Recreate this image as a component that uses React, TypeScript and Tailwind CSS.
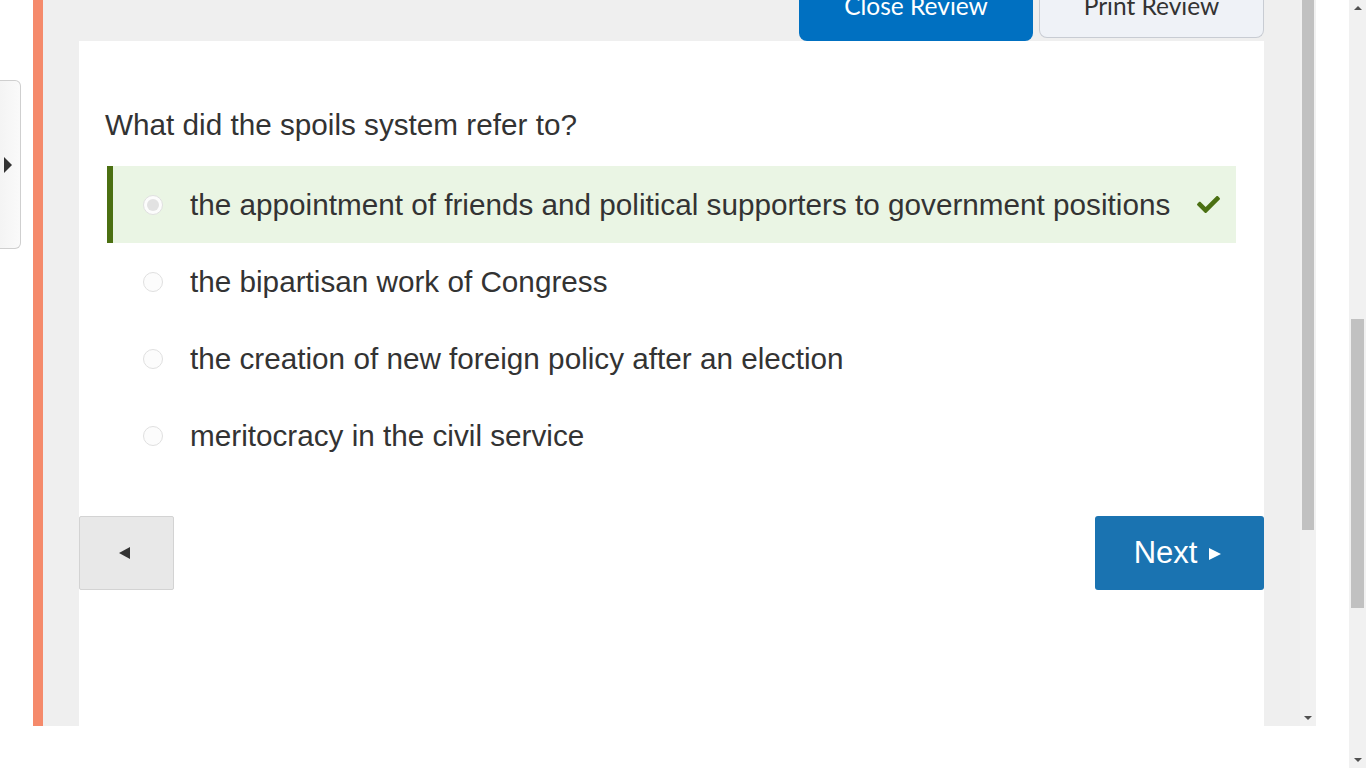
import React from 'react';
import { FaCheck } from 'react-icons/fa';

const options = [
    'the appointment of friends and political supporters to government positions',
    'the bipartisan work of Congress',
    'the creation of new foreign policy after an election',
    'meritocracy in the civil service',
];

const Scrollbar: React.FC<{ thumbTop: number; thumbHeight: number; up?: boolean; className: string }> = ({
    thumbTop,
    thumbHeight,
    up,
    className,
}) => (
    <div className={`relative bg-[#f1f1f1] ${className}`}>
        {up && (
            <div className="absolute left-0 right-0 top-[6px] flex justify-center">
                <div className="w-0 h-0 border-l-[4px] border-r-[4px] border-b-[4px] border-l-transparent border-r-transparent border-b-[#505050]" />
            </div>
        )}
        <div
            className="absolute left-[2px] right-[2px] bg-[#c1c1c1]"
            style={{ top: thumbTop, height: thumbHeight }}
        />
        <div className="absolute left-0 right-0 bottom-[6px] flex justify-center">
            <div className="w-0 h-0 border-l-[4px] border-r-[4px] border-t-[4px] border-l-transparent border-r-transparent border-t-[#505050]" />
        </div>
    </div>
);

const App: React.FC = () => {
    return (
        <div
            className="relative w-[1366px] h-[768px] bg-white overflow-hidden flex"
            style={{ fontFamily: '"Liberation Sans", Arial, sans-serif' }}
        >
            <div className="flex flex-col w-[1349px]">
                <div className="flex h-[726px]">
                    {/* left gutter with collapsed sidebar tab */}
                    <div className="w-[33px] pt-[80px]">
                        <div className="w-[21px] h-[169px] rounded-r-[6px] border border-l-0 border-[#cfcfcf] bg-gradient-to-r from-[#f4f4f4] to-[#fafafa] flex items-center pl-[4px]">
                            <div className="w-0 h-0 border-t-[8px] border-b-[8px] border-l-[8px] border-t-transparent border-b-transparent border-l-[#333]" />
                        </div>
                    </div>
                    <div className="w-[10px] bg-[#f58a6b]" />

                    {/* main gray area */}
                    <div className="w-[1257px] bg-[#efefef] pl-[36px] pr-[36px] flex flex-col">
                        <div className="h-[41px] flex justify-end items-start gap-[6px] overflow-hidden" style={{ fontFamily: 'Lato, sans-serif' }}>
                            <div className="w-[234px] h-[41px] bg-[#0070c1] rounded-b-[8px] text-white text-[24.5px] text-center overflow-hidden">
                                <span className="block leading-[24px] -mt-[6px]">Close Review</span>
                            </div>
                            <div className="w-[225px] h-[38px] bg-[#eff2f7] border border-t-0 border-[#c8ccd3] rounded-b-[8px] text-[#333] text-[24.5px] text-center overflow-hidden">
                                <span className="block leading-[24px] -mt-[6px]">Print Review</span>
                            </div>
                        </div>

                        <div className="flex-1 bg-white px-[28px] flex flex-col">
                            <div className="pt-[66px] text-[29.7px] leading-[36px] text-[#333] -ml-[2px]">
                                What did the spoils system refer to?
                            </div>
                            <div className="mt-[23px] flex flex-col">
                                {options.map((text, i) => {
                                    const correct = i === 0;
                                    return (
                                        <div
                                            key={i}
                                            className={`h-[77px] flex items-center border-l-[6px] ${
                                                correct ? 'bg-[#eaf5e4] border-[#4b7012]' : 'border-transparent'
                                            }`}
                                        >
                                            <div className="w-[20px] h-[20px] ml-[30px] rounded-full border border-[#e0e0e0] bg-[#fcfcfc] flex items-center justify-center">
                                                {correct && <div className="w-[12px] h-[12px] rounded-full bg-[#e2e2e2]" />}
                                            </div>
                                            <div className="ml-[27px] flex-1 text-[29.7px] leading-[36px] text-[#333]">{text}</div>
                                            {correct && <FaCheck className="mr-[16px] text-[#4b7012]" size={23} />}
                                        </div>
                                    );
                                })}
                            </div>
                            <div className="mt-[42px] -mx-[28px] flex justify-between">
                                <div className="w-[95px] h-[74px] bg-[#e8e8e8] border border-[#d3d3d3] rounded-[2px] flex items-center justify-center">
                                    <div className="w-0 h-0 border-t-[6px] border-b-[6px] border-r-[11px] border-t-transparent border-b-transparent border-r-[#333] -ml-[4px]" />
                                </div>
                                <div className="w-[169px] h-[74px] bg-[#1a73b1] rounded-[3px] flex items-center justify-center text-white text-[31px] gap-[12px]">
                                    <span className="-ml-[4px]">Next</span>
                                    <div className="w-0 h-0 border-t-[6px] border-b-[6px] border-l-[12px] border-t-transparent border-b-transparent border-l-white mt-[2px]" />
                                </div>
                            </div>
                        </div>
                    </div>

                    <Scrollbar className="w-[16px]" thumbTop={0} thumbHeight={530} />
                    <div className="w-[33px] bg-white" />
                </div>
                <div className="flex-1 bg-white" />
            </div>
            <Scrollbar className="w-[17px] h-[768px]" thumbTop={319} thumbHeight={289} up />
        </div>
    );
};

export default App;
